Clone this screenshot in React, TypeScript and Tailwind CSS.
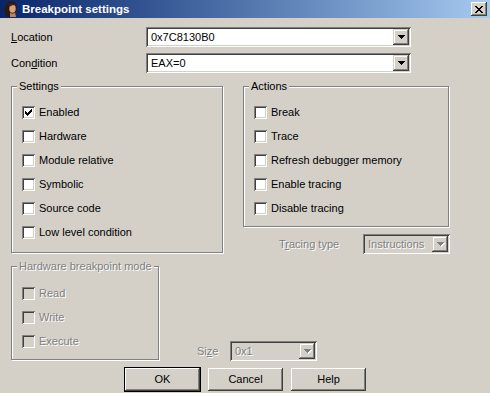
import React from "react";

const SUNKEN =
  "shadow-[inset_1px_1px_0_#808080,inset_-1px_-1px_0_#fff,inset_2px_2px_0_#404040,inset_-2px_-2px_0_#d4d0c8]";
const DISABLED = "text-[#808080] [text-shadow:1px_1px_0_#fff]";

function CheckBox({ checked, disabled }: { checked?: boolean; disabled?: boolean }) {
  return (
    <div
      className={`h-[13px] w-[13px] shrink-0 p-[3px] ${SUNKEN} ${disabled ? "bg-[#d4d0c8]" : "bg-white"}`}
    >
      {checked && (
        <svg width="7" height="7" viewBox="0 0 7 7" shapeRendering="crispEdges" className="block">
          <path
            d="M6 0h1v1h-1zM5 1h2v1h-2zM0 2h1v1h-1zM4 2h3v1h-3zM0 3h2v1h-2zM3 3h3v1h-3zM0 4h5v1h-5zM1 5h3v1h-3zM2 6h1v1h-1z"
            fill="#000"
          />
        </svg>
      )}
    </div>
  );
}

function Option({ label, checked, disabled }: { label: string; checked?: boolean; disabled?: boolean }) {
  return (
    <div className="flex h-[24px] items-start pl-[10px] pt-[6px]">
      <CheckBox checked={checked} disabled={disabled} />
      <span className={`ml-[4px] whitespace-nowrap ${disabled ? DISABLED : ""}`}>{label}</span>
    </div>
  );
}

function Arrow({ disabled }: { disabled?: boolean }) {
  const d = "M0 0h7v1H0zM1 1h5v1H1zM2 2h3v1H2zM3 3h1v1H3z";
  return (
    <svg width="8" height="5" viewBox="0 0 8 5" shapeRendering="crispEdges" className="block">
      {disabled ? (
        <>
          <path d={d} fill="#fff" transform="translate(1 1)" />
          <path d={d} fill="#808080" />
        </>
      ) : (
        <path d={d} fill="#000" />
      )}
    </svg>
  );
}

function Combo({ value, width, disabled }: { value: string; width: string; disabled?: boolean }) {
  return (
    <div className={`flex h-[20px] shrink-0 p-[2px] ${width} ${SUNKEN} ${disabled ? "bg-[#d4d0c8]" : "bg-white"}`}>
      <div className={`flex flex-1 items-center overflow-hidden whitespace-nowrap pl-[3px] ${disabled ? DISABLED : ""}`}>
        {value}
      </div>
      <div className="flex h-[16px] w-[16px] items-center justify-center bg-[#d4d0c8] pl-[1px] shadow-[inset_-1px_-1px_0_#404040,inset_1px_1px_0_#d4d0c8,inset_-2px_-2px_0_#808080,inset_2px_2px_0_#fff]">
        <Arrow disabled={disabled} />
      </div>
    </div>
  );
}

function Button({ label, isDefault }: { label: string; isDefault?: boolean }) {
  const face = (
    <div className="flex h-[23px] w-[75px] items-center justify-center bg-[#d4d0c8] shadow-[inset_-1px_-1px_0_#404040,inset_1px_1px_0_#fff,inset_-2px_-2px_0_#808080,inset_2px_2px_0_#d4d0c8]">
      {label}
    </div>
  );
  if (isDefault) return <div className="border border-black">{face}</div>;
  return face;
}

function Group({
  title,
  className,
  disabled,
  children,
}: {
  title: string;
  className: string;
  disabled?: boolean;
  children: React.ReactNode;
}) {
  return (
    <fieldset
      className={`shrink-0 border border-[#808080] shadow-[inset_1px_1px_0_#fff,1px_1px_0_#fff] ${className}`}
    >
      <legend className={`ml-[5px] bg-[#d4d0c8] px-[2px] leading-[13px] ${disabled ? DISABLED : ""}`}>{title}</legend>
      {children}
    </fieldset>
  );
}

function TitleIcon() {
  return (
    <svg width="16" height="16" viewBox="0 0 16 16" className="block">
      <path d="M3 15 C1 11 1 5 4 2 C6 0 11 0 13 3 C14 5 14 8 13 10 L12 16 L3 16 Z" fill="#2b1a12" />
      <ellipse cx="9.5" cy="7.5" rx="3.2" ry="4.3" fill="#d7a27c" />
      <path d="M7 11 C8 13 11 13 12 11 L13 16 L7 16 Z" fill="#b98462" />
      <path d="M5 3 C7 2 11 2 12.5 4.5 C11 4 8 4 6.5 6 Z" fill="#3a2418" />
    </svg>
  );
}

function TitleBar() {
  return (
    <div className="flex h-[18px] items-center bg-linear-to-r from-[#0a246a] to-[#a6caf0] pl-[3px] pr-[3px]">
      <TitleIcon />
      <span className="ml-[3px] flex-1 text-[11.5px] font-bold text-white">Breakpoint settings</span>
      <div className="flex h-[14px] w-[16px] items-center justify-center bg-[#d4d0c8] shadow-[inset_-1px_-1px_0_#404040,inset_1px_1px_0_#fff,inset_-2px_-2px_0_#808080,inset_2px_2px_0_#d4d0c8]">
        <svg width="8" height="7" viewBox="0 0 8 7" shapeRendering="crispEdges" className="block">
          <path
            d="M0 0h2v1H0zM6 0h2v1H6zM1 1h2v1H1zM5 1h2v1H5zM2 2h4v1H2zM3 3h2v1H3zM2 4h4v1H2zM1 5h2v1H1zM5 5h2v1H5zM0 6h2v1H0zM6 6h2v1H6z"
            fill="#000"
          />
        </svg>
      </div>
    </div>
  );
}

export default function App() {
  return (
    <div className="h-[393px] w-[490px] overflow-hidden bg-[#d4d0c8] font-['Liberation_Sans',Arial,sans-serif] text-[11px] leading-[13px] text-black">
      <TitleBar />
      <div className="px-[11px] pt-[9px]">
        <div className="flex h-[20px] items-center">
          <span className="w-[135px]">
            <u>L</u>ocation
          </span>
          <Combo value="0x7C8130B0" width="w-[265px]" />
        </div>
        <div className="mt-[6px] flex h-[20px] items-center">
          <span className="w-[135px]">
            Con<u>d</u>ition
          </span>
          <Combo value="EAX=0" width="w-[265px]" />
        </div>

        <div className="mt-[7px] flex items-start">
          <Group title="Settings" className="h-[173px] w-[212px] pt-[7px]">
            <Option label="Enabled" checked />
            <Option label="Hardware" />
            <Option label="Module relative" />
            <Option label="Symbolic" />
            <Option label="Source code" />
            <Option label="Low level condition" />
          </Group>
          <div className="ml-[20px] flex flex-col">
            <Group title="Actions" className="h-[147px] w-[206px] pt-[7px]">
              <Option label="Break" />
              <Option label="Trace" />
              <Option label="Refresh debugger memory" />
              <Option label="Enable tracing" />
              <Option label="Disable tracing" />
            </Group>
            <div className="mt-[7px] flex h-[20px] items-center">
              <span className={`ml-[36px] w-[84px] ${DISABLED}`}>
                T<u>r</u>acing type
              </span>
              <Combo value="Instructions" width="w-[87px]" disabled />
            </div>
          </div>
        </div>

        <div className="mt-[6px] flex items-end">
          <Group title="Hardware breakpoint mode" className="h-[100px] w-[148px] pt-[8px]" disabled>
            <Option label="Read" disabled />
            <Option label="Write" disabled />
            <Option label="Execute" disabled />
          </Group>
          <div className="mb-[-1px] ml-[38px] flex h-[20px] items-center">
            <span className={`w-[33px] ${DISABLED}`}>
              Si<u>z</u>e
            </span>
            <Combo value="0x1" width="w-[87px]" disabled />
          </div>
        </div>

        <div className="mt-[7px] flex items-center justify-center">
          <Button label="OK" isDefault />
          <div className="ml-[7px]">
            <Button label="Cancel" />
          </div>
          <div className="ml-[8px]">
            <Button label="Help" />
          </div>
        </div>
      </div>
    </div>
  );
}
